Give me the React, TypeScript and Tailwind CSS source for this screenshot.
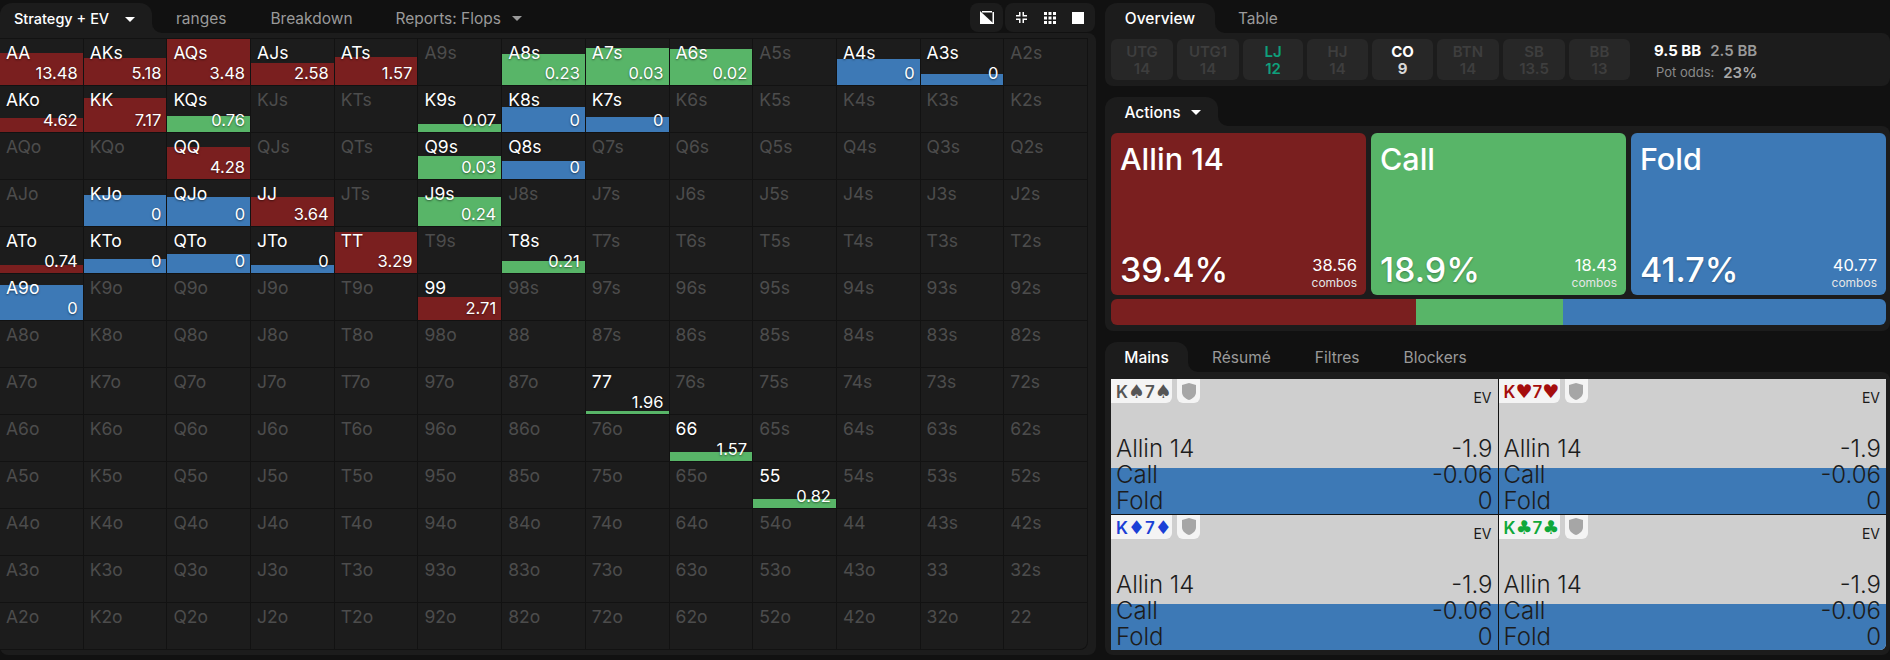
import React from "react";

const RANKS = ["A","K","Q","J","T","9","8","7","6","5","4","3","2"];
type Color = "r" | "g" | "b";
const ACTIVE: Record<string, [string, number, Color]> = {
  AA:["13.48",32,"r"],AKs:["5.18",27,"r"],AQs:["3.48",46,"r"],AJs:["2.58",22,"r"],ATs:["1.57",28,"r"],
  A8s:["0.23",31,"g"],A7s:["0.03",37,"g"],A6s:["0.02",36,"g"],A4s:["0",26,"b"],A3s:["0",11,"b"],
  AKo:["4.62",14,"r"],KK:["7.17",34,"r"],KQs:["0.76",16,"g"],K9s:["0.07",8,"g"],K8s:["0",25,"b"],K7s:["0",15,"b"],
  QQ:["4.28",32,"r"],Q9s:["0.03",23,"g"],Q8s:["0",18,"b"],
  KJo:["0",31,"b"],QJo:["0",29,"b"],JJ:["3.64",29,"r"],J9s:["0.24",29,"g"],
  ATo:["0.74",8,"r"],KTo:["0",14,"b"],QTo:["0",19,"b"],JTo:["0",8,"b"],TT:["3.29",41,"r"],T8s:["0.21",12,"g"],
  A9o:["0",35,"b"],"99":["2.71",23,"r"],"77":["1.96",3,"g"],"66":["1.57",9,"g"],"55":["0.82",9,"g"],
};
const BAR: Record<Color,string> = { r:"bg-[#7a1f1f]", g:"bg-[#58b568]", b:"bg-[#3d79b6]" };

function Caret({ className }: { className: string }) {
  return <svg width="10" height="5" viewBox="0 0 10 5" className={className}><path d="M0 0h10L5 5z" fill="currentColor"/></svg>;
}

function Cell({ name }: { name: string }) {
  const a = ACTIVE[name];
  return (
    <div className="relative bg-[#1c1c1c] overflow-hidden flex flex-col justify-between">
      {a && <div className={`absolute bottom-0 left-0 right-0 ${BAR[a[2]]}`} style={{ height: a[1] }} />}
      <div className={`relative pl-[6px] pt-[4px] text-[17.5px] leading-[20px] ${a ? "text-white [text-shadow:0_1px_2px_rgba(0,0,0,0.5)]" : "text-[#4c4c4c]"}`}>{name}</div>
      {a && <div className="relative pr-[5px] pb-[2px] text-right text-[16.5px] leading-[20px] text-white [text-shadow:0_1px_2px_rgba(0,0,0,0.5)]">{a[0]}</div>}
    </div>
  );
}

function TopTabs() {
  return (
    <div className="flex h-[33px] pt-[3px] text-[15.5px] leading-[20px]">
      <div className="w-[152px] bg-[#1c1c1c] rounded-t-xl flex items-center pl-[14px] pt-[2px] gap-[16px] text-[14.5px] font-medium text-white">
        <span className="whitespace-nowrap">Strategy + EV</span> <Caret className="text-white" />
      </div>
      <div className="flex-1 bg-[#1c1c1c]">
        <div className="h-full bg-[#111111] rounded-bl-[10px] flex items-center text-[#9a9a9a]">
          <span className="ml-[24px] mt-[2px]">ranges</span>
          <span className="ml-[44px] mt-[2px]">Breakdown</span>
          <span className="ml-[43px] mt-[2px]">Reports: Flops</span>
          <Caret className="ml-[11px] text-[#9a9a9a]" />
          <div className="ml-auto mr-[1px] flex gap-[2px] h-[29px] mb-[1px]">
            <div className="w-[33px] rounded-lg bg-[#1c1c1c] flex items-center justify-center">
              <svg width="14" height="13" viewBox="0 0 14 13"><rect width="14" height="13" fill="#fff"/><path d="M0 0h14v13z" fill="#1c1c1c"/><path d="M2 0h10v1.500H2z" fill="#fff"/><path d="M12.500 1h1.500v12h-1.500z" fill="#fff"/></svg>
            </div>
            <div className="w-[90px] rounded-lg bg-[#1c1c1c] flex items-center justify-between px-[11px]">
              <svg width="11" height="11" viewBox="0 0 11 11" fill="#fff"><path d="M3 0h1.500v4.500H0V3h3zM6.500 0H8v3h3v1.500H6.500zM0 6.500h4.500V11H3V8H0zM6.500 6.500H11V8H8v3H6.500z"/></svg>
              <svg width="12" height="12" viewBox="0 0 12 12" fill="#fff"><path d="M0 0h3v3H0zM4.500 0h3v3h-3zM9 0h3v3H9zM0 4.500h3v3H0zM4.500 4.500h3v3h-3zM9 4.500h3v3H9zM0 9h3v3H0zM4.500 9h3v3h-3zM9 9h3v3H9z"/></svg>
              <div className="w-[12px] h-[12px] bg-white" />
            </div>
          </div>
        </div>
      </div>
    </div>
  );
}

function RangeGrid() {
  const cells: string[] = [];
  RANKS.forEach((r, i) => RANKS.forEach((c, j) => {
    cells.push(i === j ? r + c : i < j ? r + c + "s" : c + r + "o");
  }));
  return (
    <div className="h-[622px] bg-[#1c1c1c] rounded-tr-lg rounded-b-lg w-full pt-[6px]">
      <div className="w-[1087px] grid grid-cols-[repeat(13,minmax(0,1fr))] grid-rows-[repeat(13,46px)] gap-px bg-[#121212] border-y border-r border-[#121212] rounded-br-lg overflow-hidden box-content -mt-[1px]">
        {cells.map((n) => <Cell key={n} name={n} />)}
      </div>
    </div>
  );
}

const SEATS = [
  ["UTG","14",62,"d"],["UTG1","14",62,"d"],["LJ","12",60,"l"],["HJ","14",61,"d"],["CO","9",61,"c"],["BTN","14",62,"d"],["SB","13.5",62,"d"],["BB","13",61,"d"],
] as const;

function Seats() {
  return (
    <div className="h-[53px] bg-[#1c1c1c] rounded-tr-lg rounded-b-lg px-[6px] pt-[6px] flex text-[15px] leading-[17px] text-center">
      <div className="flex gap-[4px]">
        {SEATS.map(([n, v, w, k]) => (
          <div key={n} className="h-[41px] rounded-md bg-[#272727] flex flex-col justify-center font-semibold" style={{ width: w }}>
            <div className={k === "l" ? "text-[#0fa07c]" : k === "c" ? "text-white font-bold" : "text-[#3e3e3e]"}>{n}</div>
            <div className={k === "l" ? "text-[#0fa07c]" : k === "c" ? "text-[#d8d8d8] font-bold" : "text-[#3e3e3e]"}>{v}</div>
          </div>
        ))}
      </div>
      <div className="ml-[24px] mt-[3px] text-left">
        <div className="flex gap-[9px] font-semibold"><span className="text-white font-bold">9.5 BB</span><span className="text-[#9a9a9a]">2.5 BB</span></div>
        <div className="mt-[5px] flex items-center ml-[2px] gap-[9px]"><span className="text-[13px] font-normal text-[#8a8a8a]">Pot odds:</span><span className="font-semibold text-[#a8a8a8]">23%</span></div>
      </div>
    </div>
  );
}

function ActionCard({ title, pct, combos, color }: { title: string; pct: string; combos: string; color: string }) {
  return (
    <div className={`flex-1 rounded-md ${color} pl-[9px] pr-[9px] flex flex-col justify-between text-white pt-[7px] pb-[5px]`}>
      <div className="text-[30.5px] leading-[38px] font-medium">{title}</div>
      <div className="flex items-end justify-between">
        <div className="text-[34px] leading-[42px] -mb-[1px] font-medium [text-shadow:0_1px_2px_rgba(0,0,0,0.3)]">{pct}</div>
        <div className="text-right">
          <div className="text-[16.5px] leading-[18px] font-normal">{combos}</div>
          <div className="text-[12px] leading-[15px] font-normal text-[#e6e6e6] mt-[1px]">combos</div>
        </div>
      </div>
    </div>
  );
}

function Actions() {
  return (
    <div className="h-[205px] bg-[#1c1c1c] rounded-tr-lg rounded-b-lg pt-[7px] pb-[6px] pl-[6px] pr-[4px] flex flex-col gap-[4px]">
      <div className="h-[162px] flex gap-[5px]">
        <ActionCard title="Allin 14" pct="39.4%" combos="38.56" color="bg-[#7a1f1f]" />
        <ActionCard title="Call" pct="18.9%" combos="18.43" color="bg-[#58b568]" />
        <ActionCard title="Fold" pct="41.7%" combos="40.77" color="bg-[#3d79b6]" />
      </div>
      <div className="h-[26px] flex rounded-md overflow-hidden">
        <div className="w-[39.4%] bg-[#7a1f1f]" />
        <div className="w-[18.9%] bg-[#58b568]" />
        <div className="flex-1 bg-[#3d79b6]" />
      </div>
    </div>
  );
}

function Shield() {
  return (
    <div className="ml-[5px] w-[23px] h-[24px] bg-[#f4f4f4] rounded-b-md flex items-center justify-center">
      <svg width="14" height="17" viewBox="0 0 14 17"><path d="M7 0l7 2v7c0 4-3 6.500-7 8-4-1.500-7-4-7-8V2z" fill="#a6a6a6"/></svg>
    </div>
  );
}

function Suit({ s }: { s: string }) {
  return <span className="font-['DejaVu_Sans',sans-serif] text-[19px] leading-[24px] font-normal">{s}</span>;
}

function Hand({ r, s, color, rightBorder, bottomBorder }: { r: string; s: string; color: string; rightBorder?: boolean; bottomBorder?: boolean }) {
  return (
    <div className={`relative flex flex-col bg-[#cfcfcf] ${rightBorder ? "border-r border-[#111]" : ""} ${bottomBorder ? "border-b border-[#111]" : ""}`}>
      <div className="flex h-[24px]">
        <div className={`w-[61px] bg-[#f4f4f4] rounded-br-md pl-[5px] text-[17px] leading-[24px] font-semibold whitespace-nowrap overflow-hidden ${color}`}>{r}<Suit s={s} />7<Suit s={s} /></div>
        <Shield />
        <div className="ml-auto mt-[10px] mr-[6px] text-[14px] leading-[18px] font-normal text-[#1a1a1a]">EV</div>
      </div>
      <div className="flex-1 relative flex flex-col justify-end">
        <div className="absolute left-0 right-0 bottom-0 h-[46px] bg-[#3d79b6]" />
        {[["Allin 14","-1.9"],["Call","-0.06"],["Fold","0"]].map(([l, v]) => (
          <div key={l} className="relative flex justify-between px-[5px] text-[24px] leading-[26px] font-light text-[#1c1c1c]">
            <span>{l}</span><span>{v}</span>
          </div>
        ))}
      </div>
    </div>
  );
}

function Hands() {
  return (
    <div className="h-[283px] bg-[#1c1c1c] rounded-b-lg rounded-tr-lg pt-[7px] pb-[5px] pl-[6px] pr-[4px]">
      <div className="h-full grid grid-cols-2 grid-rows-2 rounded-br-md overflow-hidden">
        <Hand r="K" s="♠" color="text-[#555555]" rightBorder bottomBorder />
        <Hand r="K" s="♥" color="text-[#a50d0d]" bottomBorder />
        <Hand r="K" s="♦" color="text-[#1a3fd6]" rightBorder />
        <Hand r="K" s="♣" color="text-[#0fa83a]" />
      </div>
    </div>
  );
}

export default function App() {
  return (
    <div className="w-[1890px] h-[660px] bg-[#111111] flex overflow-hidden font-['Inter',sans-serif]">
      <div className="w-[1096px] shrink-0">
        <TopTabs />
        <RangeGrid />
      </div>
      <div className="ml-[9px] flex-1 min-w-0 text-[15.5px]">
        <div className="flex h-[33px] pt-[3px] leading-[20px]">
          <div className="w-[110px] bg-[#1c1c1c] rounded-t-xl flex items-center justify-center pt-[2px] font-medium text-white">Overview</div>
          <div className="flex-1 bg-[#1c1c1c]"><div className="h-full bg-[#111111] rounded-bl-[10px] flex items-center pl-[23px] pt-[2px] text-[#9a9a9a]">Table</div></div>
        </div>
        <Seats />
        <div className="flex h-[29px] mt-[11px] leading-[20px]">
          <div className="w-[113px] bg-[#1c1c1c] rounded-t-xl flex items-center justify-center gap-[10px] pl-[2px] pt-[2px] font-medium text-white">Actions <Caret className="text-white" /></div>
          <div className="flex-1 bg-[#1c1c1c]"><div className="h-full bg-[#111111] rounded-bl-[10px]" /></div>
        </div>
        <Actions />
        <div className="flex h-[30px] mt-[11px] leading-[20px]">
          <div className="w-[83px] bg-[#1c1c1c] rounded-t-xl flex items-center justify-center pt-[2px] font-medium text-white">Mains</div>
          <div className="flex-1 bg-[#1c1c1c]">
            <div className="h-full bg-[#111111] rounded-bl-[10px] flex items-center pt-[2px] text-[#9a9a9a]">
              <span className="ml-[24px]">Résumé</span>
              <span className="ml-[44px]">Filtres</span>
              <span className="ml-[44px]">Blockers</span>
            </div>
          </div>
        </div>
        <Hands />
      </div>
    </div>
  );
}
